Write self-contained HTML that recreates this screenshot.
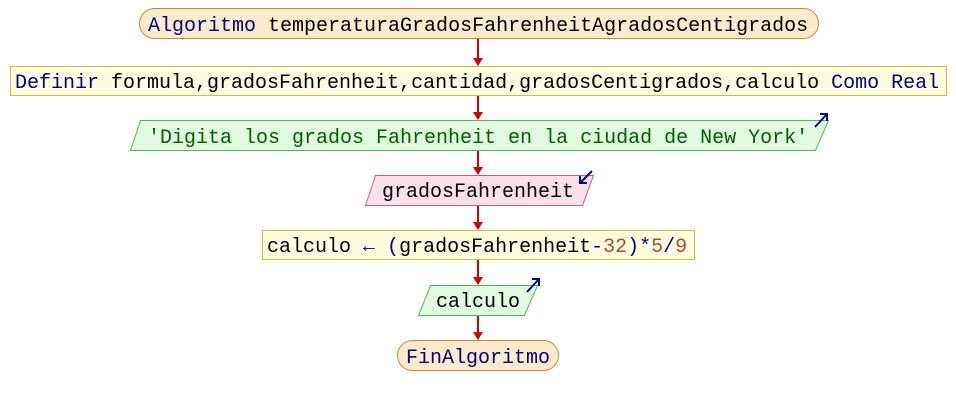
<!DOCTYPE html>
<html><head><meta charset="utf-8"><style>
html,body{margin:0;padding:0;background:#fff;width:956px;height:405px;overflow:hidden}
svg text{font-family:"Liberation Mono","DejaVu Sans Mono",monospace;font-size:20px}
.k{fill:#000080}.s{fill:#006000}.n{fill:#a0522d}
</style></head><body>
<svg width="956" height="405" xmlns="http://www.w3.org/2000/svg">
<g stroke="#cc0000" stroke-width="2" fill="none">
<line x1="478" y1="38" x2="478" y2="60"/>
<line x1="478" y1="95" x2="478" y2="114"/>
<line x1="478" y1="150" x2="478" y2="169"/>
<line x1="478" y1="205" x2="478" y2="224"/>
<line x1="478" y1="260" x2="478" y2="279"/>
<line x1="478" y1="315" x2="478" y2="334"/>
</g>
<g fill="#cc0000">
<path d="M473,58 L483,58 L478,66 Z"/>
<path d="M473,112 L483,112 L478,120 Z"/>
<path d="M473,167 L483,167 L478,175 Z"/>
<path d="M473,222 L483,222 L478,230 Z"/>
<path d="M473,277 L483,277 L478,285 Z"/>
<path d="M473,332 L483,332 L478,340 Z"/>
</g>
<rect x="139.5" y="8.5" width="679" height="30" rx="15" fill="#fdebcc" stroke="#c98a3a"/>
<text x="148" y="31"><tspan class="k">Algoritmo</tspan> temperaturaGradosFahrenheitAgradosCentigrados</text>
<rect x="10.5" y="66.5" width="936" height="29" fill="#fefde0" stroke="#c8c040"/>
<text x="15" y="88"><tspan class="k">Definir</tspan> formula,gradosFahrenheit,cantidad,gradosCentigrados,calculo <tspan class="k">Como Real</tspan></text>
<polygon points="140.5,120.5 828.5,120.5 815.5,150.5 130.5,150.5" fill="#e0fbe0" stroke="#50b850"/>
<text x="148" y="143" class="s">'Digita los grados Fahrenheit en la ciudad de New York'</text>
<path d="M815,127 L827,114 M820,114 L827,114 L827,121" stroke="#000080" stroke-width="2" fill="none"/>
<polygon points="375.5,175.5 593.5,175.5 582.5,205.5 365.5,205.5" fill="#fde0ea" stroke="#c06080"/>
<text x="382" y="197">gradosFahrenheit</text>
<path d="M592,171 L580,183 M580,176 L580,183 L587,183" stroke="#000080" stroke-width="2" fill="none"/>
<rect x="262.5" y="230.5" width="432" height="29" fill="#fefde0" stroke="#c8c040"/>
<text x="267" y="252">calculo <tspan class="k">←</tspan> <tspan class="k">(</tspan>gradosFahrenheit<tspan class="k">-</tspan><tspan class="n">32</tspan><tspan class="k">)*</tspan><tspan class="n">5</tspan><tspan class="k">/</tspan><tspan class="n">9</tspan></text>
<polygon points="430.5,285.5 537.5,285.5 524.5,315.5 418.5,315.5" fill="#e0fbe0" stroke="#50b850"/>
<text x="436" y="307">calculo</text>
<path d="M527,292 L539,279 M532,279 L539,279 L539,286" stroke="#000080" stroke-width="2" fill="none"/>
<rect x="397.5" y="340.5" width="161" height="30" rx="15" fill="#fdebcc" stroke="#c98a3a"/>
<text x="406" y="363" class="k">FinAlgoritmo</text>
</svg>
</body></html>
